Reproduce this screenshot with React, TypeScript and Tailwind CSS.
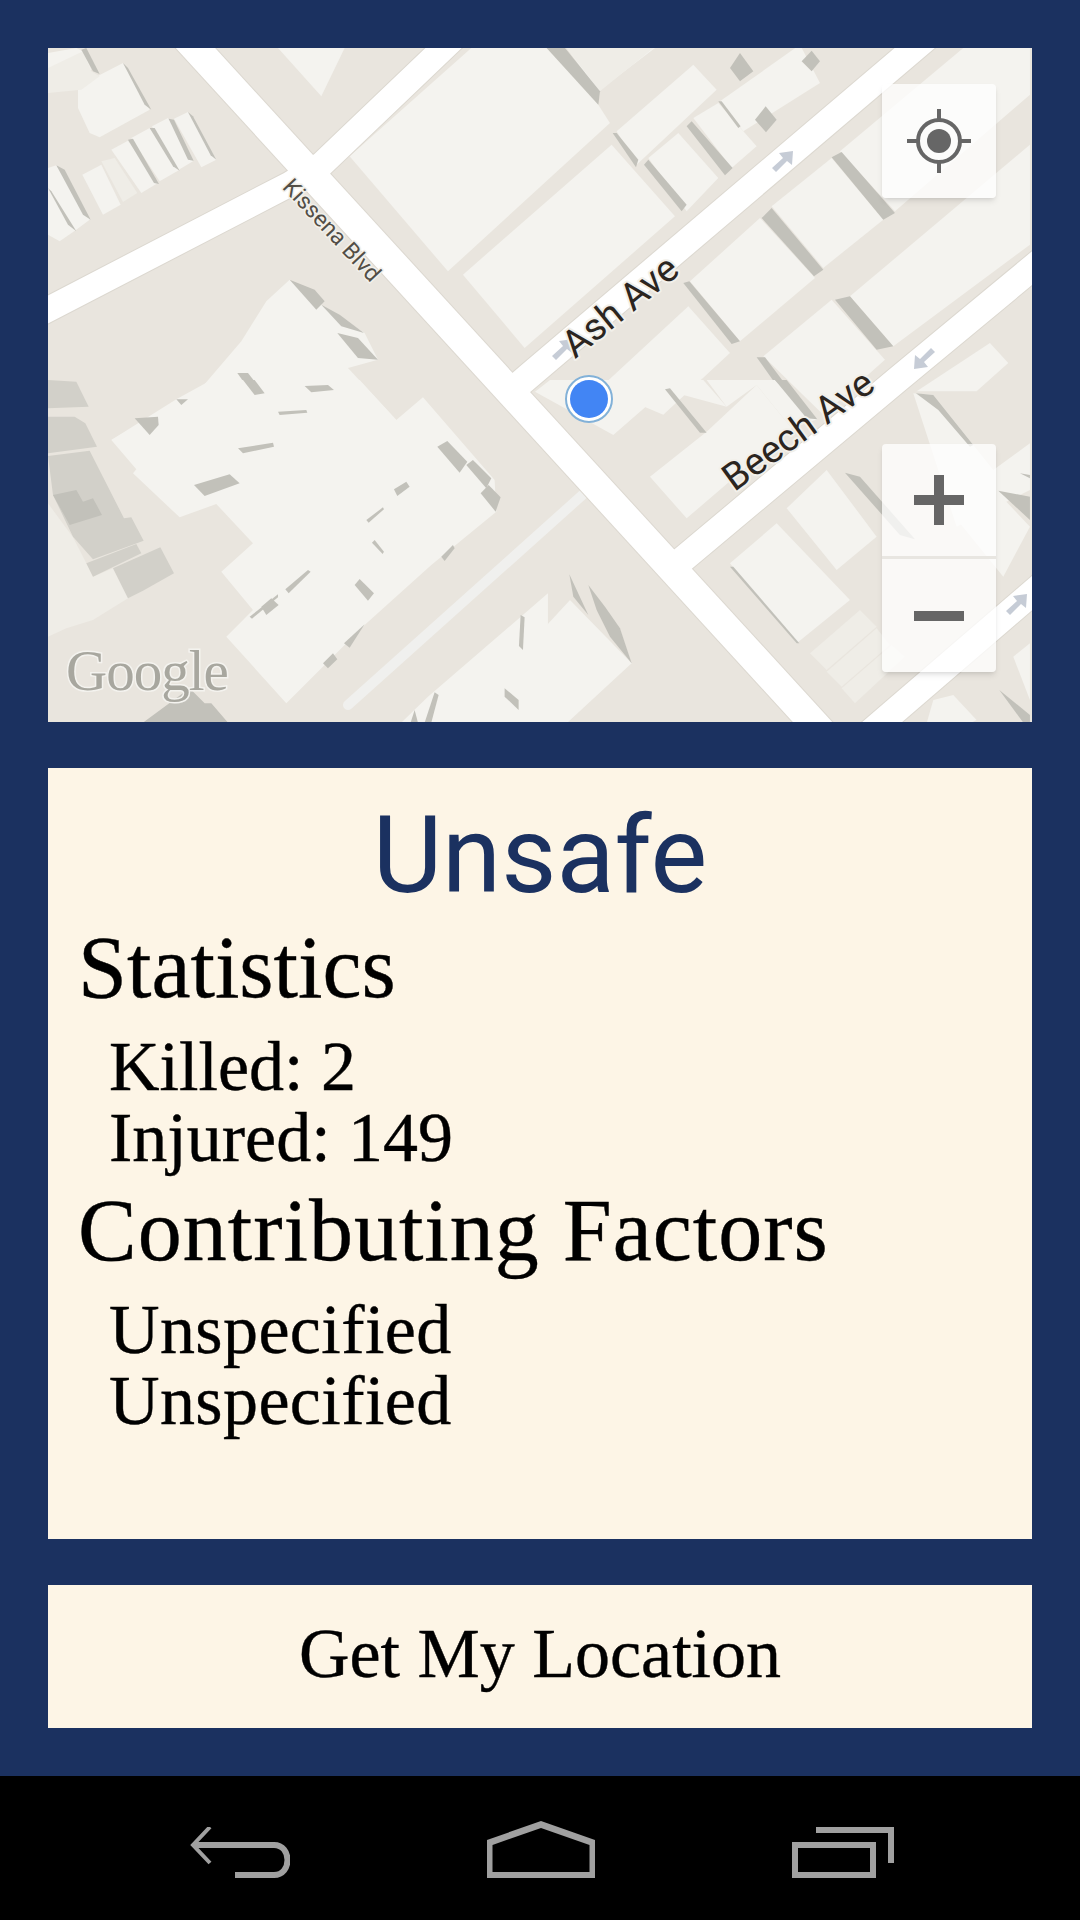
const BUILDING = '#f4f3ef';
const SHADE = '#c2c1ba';
const LOT = '#efede7';
const GREY = '#d2d0c9';

// polygons are written in the pixel space of a 3x crop, each group has its own origin
const sections = [
  {
    origin: [48, 48],
    lots: ['0,135 0,60 105,10 130,70 155,85 100,125', '160,340 200,330 268,435 225,462'],
    buildings: [
      '90,115 225,45 305,185 155,268 125,255 90,180',
      '0,15 85,0 105,10 130,65 0,135',
      '103,380 160,350 218,470 165,500',
      '190,305 240,278 330,405 280,435',
      '250,270 305,240 395,365 335,400',
      '312,235 360,210 435,340 385,370',
      '378,212 420,192 505,335 460,358',
      '0,360 25,352 125,515 85,545 35,580 0,560',
      '905,325 1270,0 1496,0 1651,170 1686,225 1200,670',
      '1245,680 1691,290 1881,505 1430,900',
      '690,0 890,0 820,145',
      '190,1176 460,1020 580,880 655,760 725,695 820,770 950,855 990,935 900,960 1045,1116',
    ],
    shades: [
      '100,5 115,0 155,78 135,70',
      '225,45 240,60 310,185 290,170',
      '240,275 255,272 333,408 318,405',
      '305,240 320,240 395,368 375,355',
      '362,212 378,215 437,338 420,335',
      '420,192 435,205 505,335 488,322',
      '25,352 50,365 128,515 105,500',
      '0,420 10,430 85,550 60,530',
      '725,695 800,725 830,760 805,785',
      '820,770 875,800 948,855 880,835',
      '868,855 930,870 990,935 930,930',
      '568,975 600,975 635,1020 600,1020',
      '770,1015 850,1010 860,1020 770,1020',
    ],
  },
  {
    origin: [530, 48],
    lots: ['110,0 370,0 210,130'],
    buildings: [
      '110,0 375,0 205,130',
      '260,250 490,50 560,125 320,350',
      '355,330 445,255 565,390 470,490',
      '490,210 565,165 680,295 605,360',
      '570,160 810,-10 870,105 640,250',
      '930,310 1300,0 1500,0 1500,140 1095,490',
      '725,475 905,330 1060,515 880,660',
      '480,700 690,510 855,690 630,880',
      '960,745 1500,290 1500,590 1090,895',
      '700,925 905,755 1065,935 880,1100',
      '210,1020 475,775 600,915 400,1100',
      '1160,1030 1380,885 1435,945 1340,1030',
    ],
    shades: [
      '50,0 105,0 210,130 205,170',
      '248,255 260,255 325,335 318,358',
      '342,350 355,335 470,470 455,490',
      '470,235 485,220 608,360 585,382',
      '600,60 630,15 670,70 630,100',
      '675,215 707,175 740,215 708,253',
      '815,40 845,8 870,40 845,70',
      '565,160 575,160 632,235 625,240',
      '460,705 478,700 630,880 605,888',
      '695,510 725,480 880,665 852,685',
      '905,328 935,312 1095,495 1060,515',
      '915,755 960,745 1090,895 1040,905',
      '680,928 705,928 790,1040 760,1040',
    ],
  },
  {
    origin: [48, 380],
    lots: ['0,370 75,472 115,550 135,590 195,565 240,655 135,720 55,745 0,770'],
    buildings: [
      '190,180 385,58 490,0 935,0 1045,120 1125,52 1340,300 1345,395 1150,555 950,735 715,970 535,770 615,690 520,575 615,490 505,372 395,412 255,280 265,268',
      '1060,1028 1140,950 1390,735 1500,640 1500,1028',
    ],
    greys: [
      '0,0 85,5 122,80 0,85',
      '0,110 80,110 112,130 147,200 0,220',
      '0,228 125,212 228,415 250,412 287,482 135,538 75,470 15,345',
      '115,550 265,492 280,520 135,590',
      '195,565 337,502 378,580 285,632 240,655',
    ],
    shades: [
      '15,345 85,330 105,365 135,355 162,405 65,435',
      '260,115 330,110 332,135 305,165',
      '385,58 420,58 400,75',
      '585,0 620,0 650,40 620,45',
      '770,18 840,15 858,30 790,37',
      '690,95 775,90 778,98 695,105',
      '570,205 675,188 678,200 585,220',
      '438,315 545,283 575,310 470,348',
      '1168,200 1198,183 1258,245 1235,278',
      '1255,255 1275,240 1330,295 1315,325',
      '1298,340 1322,315 1358,352 1343,395',
      '1038,328 1075,305 1085,320 1048,348',
      '955,420 1005,382 1008,388 962,428',
      '972,488 980,480 1008,515 1004,522',
      '712,628 780,570 788,575 722,640',
      '640,680 670,655 692,675 655,705',
      '605,710 690,643 690,652 612,716',
      '920,615 935,597 978,640 960,662',
      '888,790 950,733 905,803',
      '825,850 855,820 868,838 840,865',
      '1180,530 1215,495 1220,505 1190,543',
      '285,1028 425,925 470,970 490,970 540,1028',
      '1418,705 1430,712 1425,810 1413,798',
      '1130,1028 1160,937 1172,945 1150,1028',
      '1088,1028 1100,990 1110,1028',
      '1370,925 1412,960 1412,990 1370,950',
    ],
  },
  {
    origin: [530, 380],
    lots: ['840,820 990,690 1040,740 890,870', '890,875 1040,745 1080,795 935,920', '935,925 1085,795 1125,830 975,970'],
    buildings: [
      '15,35 60,0 520,0 590,80 405,30 250,165',
      '360,290 530,155 680,15 785,145 470,415',
      '530,0 735,0 862,118 785,145 680,15 590,80',
      '600,550 740,430 960,660 800,790',
      '770,385 890,270 1040,470 920,570',
      '1150,40 1210,45 1390,270 1500,190 1500,330 1280,440',
      '1290,430 1405,340 1500,440 1420,590',
      '0,790 120,660 305,850 110,1030 0,1030',
      '1210,960 1270,945 1340,1020 1320,1030 1190,1030',
      '1450,830 1500,790 1500,960',
    ],
    shades: [
      '405,28 420,25 530,158 510,158',
      '735,0 770,0 862,118 830,115',
      '945,278 990,290 1155,478 1110,465',
      '1158,40 1210,45 1330,195 1320,200 1225,90',
      '118,583 175,705 130,650',
      '175,615 225,680 270,745 305,850 240,770 200,690',
      '1405,332 1500,350 1500,420',
      '1408,930 1500,1005 1500,1028 1480,1028',
      '1470,280 1500,285 1500,295',
      '600,560 610,560 808,790 800,790',
    ],
  },
];

const roads = [
  { points: '168,18 840,752', width: 29 },
  { points: '20,324 290,184 322,164 475,18', width: 25 },
  { points: '950,18 530,375 510,392', width: 26 },
  { points: '670,570 897,380 1060,245', width: 26 },
  { points: '852,748 1060,569', width: 26 },
];

const arrows = [
  { x: 782, y: 162, angle: 0 },
  { x: 562, y: 350, angle: 0 },
  { x: 925, y: 358, angle: 180 },
  { x: 1016, y: 605, angle: 0 },
];

function Polys({ points, fill }: { points?: string[]; fill: string }) {
  return (
    <>
      {points?.map((p) => (
        <polygon key={p} points={p} fill={fill} />
      ))}
    </>
  );
}

function MapDrawing() {
  return (
    <svg viewBox="48 48 984 674" className="block h-full w-full">
      <rect x="48" y="48" width="984" height="674" fill="#e9e5de" />
      {sections.map((s) => (
        <g key={s.origin.join()} transform={`translate(${s.origin[0]} ${s.origin[1]}) scale(0.3333)`}>
          <Polys points={s.buildings} fill={BUILDING} />
          <Polys points={s.lots} fill={LOT} />
          <Polys points={s.greys} fill={GREY} />
          <Polys points={s.shades} fill={SHADE} />
        </g>
      ))}
      <line x1="348" y1="705" x2="588" y2="490" stroke="#f0f0ee" strokeWidth="10" strokeLinecap="round" />
      {roads.map((r) => (
        <polyline key={r.points} points={r.points} fill="none" stroke="#dcd8d0" strokeWidth={r.width + 2} />
      ))}
      {roads.map((r) => (
        <polyline key={r.points} points={r.points} fill="none" stroke="#ffffff" strokeWidth={r.width} />
      ))}
      {arrows.map((a) => (
        <polygon
          key={a.x}
          transform={`translate(${a.x} ${a.y}) rotate(${a.angle})`}
          points="-10,6 1,-4 -3,-9 11,-11 10,3 5,-1 -6,10"
          fill="#c6ccd6"
        />
      ))}
      <g fontFamily="Roboto, sans-serif" style={{ paintOrder: 'stroke' }} stroke="#f2f0ea" strokeLinejoin="round">
        <text x="620" y="319" transform="rotate(-39 620 306)" textAnchor="middle" fontSize="38" fill="#2b251f" strokeWidth="4">
          Ash Ave
        </text>
        <text x="798" y="443" transform="rotate(-36 798 430)" textAnchor="middle" fontSize="38" fill="#2b251f" strokeWidth="4">
          Beech Ave
        </text>
        <text x="332" y="238" transform="rotate(47 332 230)" textAnchor="middle" fontSize="23" fill="#524e46" strokeWidth="3">
          Kissena Blvd
        </text>
      </g>
      <text
        x="66"
        y="690"
        fontFamily="'Liberation Serif', serif"
        fontSize="57"
        letterSpacing="-1"
        fill="#a8a79f"
        stroke="#f4f3ef"
        strokeWidth="3"
        style={{ paintOrder: 'stroke' }}
      >
        Google
      </text>
      <circle cx="589" cy="399" r="23" fill="#ffffff" stroke="#82b1d8" strokeWidth="2" />
      <circle cx="589" cy="399" r="19" fill="#4285f4" />
    </svg>
  );
}

function MapControls() {
  return (
    <>
      <div className="absolute right-[36px] top-[36px] flex h-[114px] w-[114px] items-center justify-center rounded-[4px] bg-white/75 shadow-md">
        <svg width="64" height="64" viewBox="0 0 64 64" fill="none" stroke="#666666">
          <circle cx="32" cy="32" r="21" strokeWidth="4" />
          <circle cx="32" cy="32" r="12" fill="#666666" stroke="none" />
          <path d="M32 0v10M32 54v10M0 32h10M54 32h10" strokeWidth="4" />
        </svg>
      </div>
      <div className="absolute bottom-[50px] right-[36px] flex h-[228px] w-[114px] flex-col rounded-[4px] bg-white/75 shadow-md">
        <div className="flex h-[112px] items-center justify-center">
          <svg width="50" height="50" viewBox="0 0 50 50" fill="#666666">
            <path d="M20 0h10v20h20v10H30v20H20V30H0V20h20z" />
          </svg>
        </div>
        <div className="h-[3px] bg-[#e8e6e1]" />
        <div className="flex flex-1 items-center justify-center">
          <svg width="50" height="10" viewBox="0 0 50 10" fill="#666666">
            <rect width="50" height="10" />
          </svg>
        </div>
      </div>
    </>
  );
}

function NavBar() {
  return (
    <div className="flex h-[144px] items-end gap-[197px] bg-black pb-[42px] pl-[190px]">
      <svg width="100" height="51" viewBox="0 0 100 51" fill="none" stroke="#a0a0a0">
        <path d="M20 0L3 18L20 36" strokeWidth="4" />
        <path d="M3 18H84C102 18 102 48 84 48H45" strokeWidth="6" />
      </svg>
      <svg width="108" height="57" viewBox="0 0 108 57" fill="#a0a0a0">
        <path fillRule="evenodd" d="M54 0L108 19V57H0V19zM54 7L5.5 24V51H102.5V24z" />
      </svg>
      <svg width="102" height="51" viewBox="0 0 102 51" fill="#a0a0a0">
        <path d="M24 0H102V36H96V6H24z" />
        <path fillRule="evenodd" d="M0 15H84V51H0zM6 21V45H78V21z" />
      </svg>
    </div>
  );
}

const serif = "font-['Liberation_Serif',serif] text-black [-webkit-text-stroke:0.4px_black]";

export default function App() {
  return (
    <div className="flex h-[1920px] w-[1080px] flex-col bg-[#1b3160]">
      <div className="flex flex-1 flex-col gap-[46px] p-[48px]">
        <div className="relative h-[674px] shrink-0 overflow-hidden">
          <MapDrawing />
          <MapControls />
        </div>
        <div className="h-[771px] shrink-0 bg-[#fdf5e6] px-[30px] pt-[25px]">
          <h1 className="text-center font-['Roboto',sans-serif] text-[107px] leading-[125px] text-[#1b3160]">Unsafe</h1>
          <h2 className={`${serif} mt-[5px] text-[88px] leading-[90px]`}>Statistics</h2>
          <ul className={`${serif} mt-[18px] pl-[31px] text-[70px] leading-[71px]`}>
            <li>Killed: 2</li>
            <li>Injured: 149</li>
          </ul>
          <h2 className={`${serif} mt-[13px] text-[88px] leading-[90px] tracking-[1px]`}>Contributing Factors</h2>
          <ul className={`${serif} mt-[18px] pl-[31px] text-[70px] leading-[71px] tracking-[0.4px]`}>
            <li>Unspecified</li>
            <li>Unspecified</li>
          </ul>
        </div>
        <button className={`${serif} h-[143px] shrink-0 bg-[#fdf5e6] pb-[6px] text-center text-[70px]`}>Get My Location</button>
      </div>
      <NavBar />
    </div>
  );
}
